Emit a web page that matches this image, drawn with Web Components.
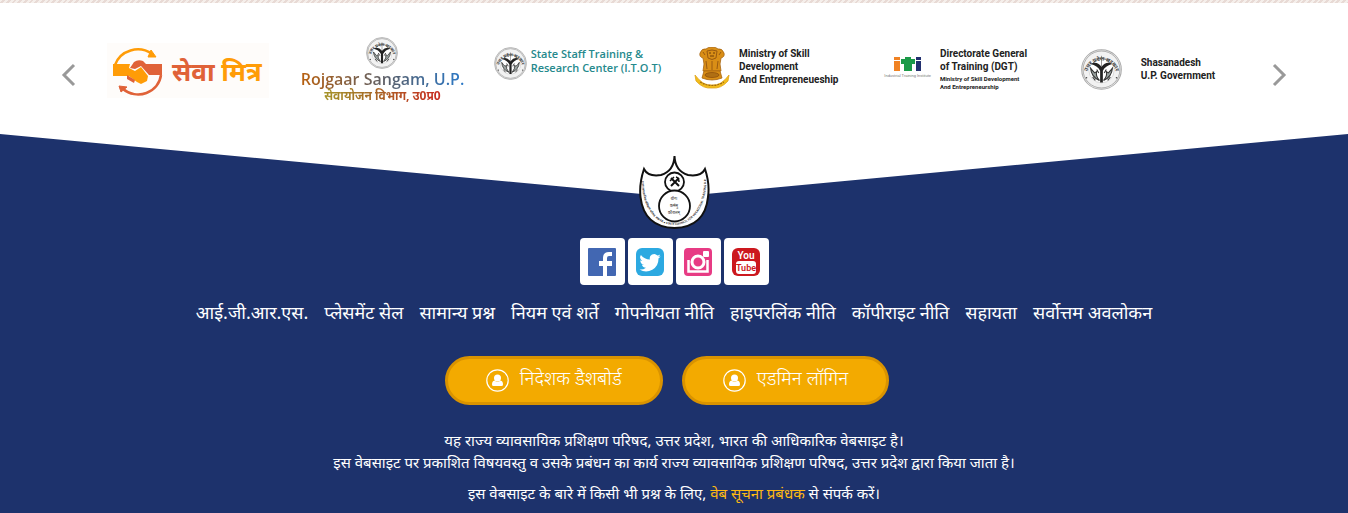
<!DOCTYPE html>
<html lang="hi">
<head>
<meta charset="utf-8">
<meta name="viewport" content="width=device-width, initial-scale=1">
<title>राज्य व्यावसायिक प्रशिक्षण परिषद, उत्तर प्रदेश</title>
<style>
  body { margin: 0; background: #fff; font-family: "Noto Sans", "Noto Sans Devanagari", sans-serif; color: #fff; }
</style>
</head>
<body>
<partner-carousel>
  <partner-logo kind="sewa"></partner-logo>
  <partner-logo kind="rojgaar"></partner-logo>
  <partner-logo kind="itot"></partner-logo>
  <partner-logo kind="skill"></partner-logo>
  <partner-logo kind="dgt"></partner-logo>
  <partner-logo kind="shasan"></partner-logo>
</partner-carousel>
<site-footer>
  <council-emblem slot="emblem"></council-emblem>
  <social-link slot="social" kind="facebook" label="Facebook"></social-link>
  <social-link slot="social" kind="twitter" label="Twitter"></social-link>
  <social-link slot="social" kind="instagram" label="Instagram"></social-link>
  <social-link slot="social" kind="youtube" label="YouTube"></social-link>
  <footer-link slot="links">आई.जी.आर.एस.</footer-link>
  <footer-link slot="links">प्लेसमेंट सेल</footer-link>
  <footer-link slot="links">सामान्य प्रश्न</footer-link>
  <footer-link slot="links">नियम एवं शर्ते</footer-link>
  <footer-link slot="links">गोपनीयता नीति</footer-link>
  <footer-link slot="links">हाइपरलिंक नीति</footer-link>
  <footer-link slot="links">कॉपीराइट नीति</footer-link>
  <footer-link slot="links">सहायता</footer-link>
  <footer-link slot="links">सर्वोत्तम अवलोकन</footer-link>
  <login-button slot="logins">निदेशक डैशबोर्ड</login-button>
  <login-button slot="logins">एडमिन लॉगिन</login-button>
  <footer-note slot="notes">यह राज्य व्यावसायिक प्रशिक्षण परिषद, उत्तर प्रदेश, भारत की आधिकारिक वेबसाइट है।<br>इस वेबसाइट पर प्रकाशित विषयवस्तु व उसके प्रबंधन का कार्य राज्य व्यावसायिक प्रशिक्षण परिषद, उत्तर प्रदेश द्वारा किया जाता है।</footer-note>
  <footer-note slot="notes">इस वेबसाइट के बारे में किसी भी प्रश्न के लिए, <a href="#">वेब सूचना प्रबंधक</a> से संपर्क करें।</footer-note>
</site-footer>

<script>
function define(name, html, setup) {
  const template = document.createElement('template');
  template.innerHTML = html;
  customElements.define(name, class extends HTMLElement {
    constructor() {
      super();
      this.attachShadow({ mode: 'open' }).append(template.content.cloneNode(true));
    }
    connectedCallback() { if (setup) setup(this, this.shadowRoot); }
  });
}

/* Round seal of the Uttar Pradesh government: bow, rivers and two fish */
define('state-seal', `
<style>
  :host { display: block; flex: none; width: var(--seal, 34px); height: var(--seal, 34px); }
  svg { display: block; width: 100%; height: 100%; }
</style>
<svg viewBox="0 0 60 60" aria-hidden="true">
  <defs><path id="arc" d="M9 34A21.500 21.500 0 0 1 51 34"/></defs>
  <circle cx="30" cy="30" r="29" fill="#f2f2f2" stroke="#aaa" stroke-width="1.500"/>
  <circle cx="30" cy="30" r="27" fill="none" stroke="#777" stroke-width=".8"/>
  <circle cx="30" cy="31" r="18.500" fill="#fff" stroke="#b5b5b5" stroke-width=".7"/>
  <text font-family="Noto Sans, sans-serif" font-size="8" font-weight="700" fill="#444"><textPath href="#arc" startOffset="50%" text-anchor="middle">उत्तर प्रदेश सरकार</textPath></text>
  <path d="M14 22Q23 17 30 26Q37 17 46 22Q36 24 32 32V49H28V32Q24 24 14 22Z" fill="#222"/>
  <path d="M18 20Q30 7 42 20" fill="none" stroke="#555" stroke-width="1.400"/>
  <path d="M30 10V26" stroke="#666" stroke-width="1"/>
  <path d="M14 28Q15 41 27 46Q21 39 23 33L20 35Q17 32 14 28ZM46 28Q45 41 33 46Q39 39 37 33L40 35Q43 32 46 28Z" fill="#9aa3a1" stroke="#333" stroke-width="1.500"/>
  <path d="M17 41l4 5M43 41l-4 5M23 30l3 5M37 30l-3 5" stroke="#333" stroke-width="1.600"/>
  <circle cx="8" cy="42" r="1.200" fill="#444"/><circle cx="52" cy="42" r="1.200" fill="#444"/>
</svg>`);

const logos = {
  sewa: `<div class="sewa">
    <svg width="50" height="50" viewBox="0 0 50 50" aria-hidden="true">
      <path d="M2 19A24 23 0 0 1 39 8" fill="none" stroke="#ff9c07" stroke-width="2.500"/>
      <path d="M38 4L43 11L35 11Z" fill="#ff9c07" stroke="#ff9c07"/>
      <path d="M48 29A23 22 0 0 1 10 43" fill="none" stroke="#e06238" stroke-width="2.500"/>
      <path d="M6 40L14 41L8 46Z" fill="#e06238" stroke="#e06238"/>
      <path d="M17 22L21 16Q25 13 30 15L33 18H49V29H40L36 29L28 20L22 23Z" fill="#e06238"/>
      <path d="M0 18H17L16 22L22 25L28 21L35 30L34 35L28 38L24 36L16 30H0Z" fill="#ff9c07"/>
      <path d="M14 29L22 34L21 37L14 33Z" fill="#e06238"/>
    </svg>
    <b><span>सेवा</span> <i>मित्र</i></b></div>`,
  rojgaar: `<div class="rojgaar"><state-seal></state-seal><b class="en">Rojgaar Sangam, U.P.</b><b class="hi">सेवायोजन विभाग, उ0प्र0</b></div>`,
  itot: `<div class="itot"><state-seal></state-seal><p>State Staff Training &amp;<br>Research Center (I.T.O.T)</p></div>`,
  skill: `<div class="skill">
    <svg width="36" height="42" viewBox="0 0 36 42" aria-hidden="true">
      <g fill="#d98e16" stroke="#a76411" stroke-width=".8">
        <path d="M9 11Q5 10 6 6Q8 1 12 2Q14 0 18 0Q22 0 24 2Q28 1 30 6Q31 10 27 11L26 17L27 24H9L10 17Z"/>
        <path d="M10 24H26L28 31Q18 35 8 31Z"/>
        <path d="M1 28Q9 39 18 38Q27 39 35 28L34 34Q27 42 18 41Q9 42 2 34Z" fill="#f2bd1c" stroke="#e0a31a"/>
      </g>
      <path d="M13 4Q18 2 23 4L22 11Q18 14 14 11ZM12 14L13 22M18 14V23M24 14L23 22M9 5L11 8M27 5L25 8" fill="none" stroke="#9a5a10" stroke-width="1"/>
      <path d="M15 6h2M19 6h2M16 9h4" stroke="#6f3c08"/>
      <ellipse cx="18" cy="28" rx="7" ry="2.500" fill="#b06f14" stroke="#8a4c0a" stroke-width=".7"/>
      <path d="M6 35Q18 42 30 35" fill="none" stroke="#a06a12" stroke-dasharray="2 1" stroke-width="1.200"/>
    </svg>
    <p>Ministry of Skill<br>Development<br>And Entrepreneueship</p></div>`,
  dgt: `<div class="dgt">
    <figure>
      <svg width="28" height="15" viewBox="0 0 28 15" aria-hidden="true">
        <path d="M0 0H6V3H0ZM0 4H6V14H0Z" fill="#f08223"/>
        <path d="M7 2H11V0H17V2H21V7H18V14H10V7H7Z" fill="#1c9a48"/>
        <path d="M22 0H27V3H22ZM22 4H27V14H22Z" fill="#22306f"/>
      </svg>
      <figcaption>Industrial Training Institute</figcaption>
    </figure>
    <p>Directorate General<br>of Training (DGT)<small>Ministry of Skill Development<br>And Entrepreneurship</small></p></div>`,
  shasan: `<div class="shasan"><state-seal></state-seal><p>Shasanadesh<br>U.P. Government</p></div>`
};

define('partner-logo', `
<style>
  :host { display: block; flex: 1; min-width: 0; margin: 0 16px; white-space: nowrap; }
  div { display: flex; box-sizing: border-box; }
  p { margin: 0; color: #222; font: 700 10px/13px Roboto, "Liberation Sans", sans-serif; }
  .sewa { margin-top: 6px; height: 55px; padding-left: 6px; gap: 9px; align-items: center; background: #fefcfa; }
  .sewa b { font-size: 26px; line-height: 48px; color: #e06238; }
  .sewa i { font-style: normal; color: #ff9c07; }
  .rojgaar { flex-direction: column; align-items: center; --seal: 32px; }
  .rojgaar .en { font: 600 16px/20px "Open Sans", sans-serif; background: linear-gradient(90deg, #b8600f, #57606e 55%, #2b79c8); background-clip: text; color: transparent; }
  .rojgaar .hi { font-size: 12px; line-height: 18px; margin-top: -2px; background: linear-gradient(90deg, #a5942a, #a66b26 40%, #c92a20); background-clip: text; color: transparent; }
  .itot { gap: 4px; padding-top: 10px; margin-left: -2px; --seal: 33px; }
  .itot p { font: 600 11px/14px "Open Sans", sans-serif; color: #25898c; }
  .skill { gap: 9px; padding: 10px 0 0 4px; }
  .dgt { gap: 9px; padding: 10px 0 0; }
  .dgt figure { margin: 10px 0 0; display: flex; flex-direction: column; align-items: center; }
  .dgt figcaption { color: #777; font: 4px/8px "Liberation Sans", sans-serif; }
  small { display: block; margin-top: 2px; font-size: 6px; line-height: 8px; }
  .shasan { gap: 19px; padding: 12px 0 0 2px; --seal: 41px; }
  .shasan p { padding-top: 7px; }
</style>
<section></section>`, (host, root) => {
  root.querySelector('section').innerHTML = logos[host.getAttribute('kind')];
});

define('partner-carousel', `
<style>
  :host { display: block; }
  .strip { height: 3px; background: repeating-linear-gradient(135deg, #f5efeb 0 2px, #e8dad5 2px 4px); }
  .row { display: grid; grid-template-columns: 91px 1fr 91px; padding: 34px 0 30px; }
  .slides { display: flex; min-width: 0; height: 67px; }
  button { border: 0; background: none; padding: 8px 0 0; display: flex; align-items: flex-start; color: #999; cursor: pointer; }
  .prev { padding-right: 14px; justify-content: flex-end; }
  .next { padding-left: 14px; justify-content: flex-start; }
  button svg { margin-top: 18px; }
</style>
<div class="strip"></div>
<div class="row">
  <button class="prev" aria-label="Previous"><svg width="16" height="24" viewBox="0 0 16 24" fill="none" stroke="currentColor" stroke-width="3"><path d="M13 2L3 12L13 22"/></svg></button>
  <div class="slides"><slot></slot></div>
  <button class="next" aria-label="Next"><svg width="16" height="24" viewBox="0 0 16 24" fill="none" stroke="currentColor" stroke-width="3"><path d="M3 2L13 12L3 22"/></svg></button>
</div>`);

define('council-emblem', `
<style>:host { display: block; } svg { display: block; }</style>
<svg width="72" height="74" viewBox="0 0 72 74" role="img" aria-label="State Council for Vocational Training">
  <defs><path id="ring" d="M4 20C2 50 16 70 36 70S70 50 68 20"/></defs>
  <path d="M36.500 1Q37 16 50 20Q63 22 67 14Q72 29 70 42Q67 72 36.500 73Q6 72 2.500 42Q1 29 6 14Q10 22 23 20Q36 16 36.500 1Z" fill="#fff" stroke="#111" stroke-width="2"/>
  <circle cx="36.500" cy="27" r="9.500" fill="#fff" stroke="#111" stroke-width="1.800"/>
  <circle cx="36.500" cy="51" r="15.500" fill="#fff" stroke="#111" stroke-width="1.800"/>
  <path d="M33 23L41 31M41 23L33 31" stroke="#111" stroke-width="2"/>
  <path d="M32 26L36 22M38 22Q41 23 41 27" fill="none" stroke="#111" stroke-width="1.500"/>
  <g font-family="Noto Sans, sans-serif" fill="#222" text-anchor="middle" font-size="4">
    <text x="36" y="45">योगः</text><text x="36" y="52">कर्मसु</text><text x="36" y="59">कौशलम्</text>
  </g>
  <text font-family="Noto Sans, sans-serif" fill="#222" font-weight="600" font-size="3"><textPath href="#ring" startOffset="6">राज्य व्यावसायिक प्रशिक्षण परिषद, लखनऊ ● STATE COUNCIL FOR VOCATIONAL TRAINING U.P.</textPath></text>
</svg>`);

const socialIcons = {
  facebook: `<rect width="28" height="28" rx="1" fill="#4267b2"/><path d="M15 28V18H11V13H15V10Q15 4 21 4H24V8H21Q19 8 19 10V13H24V18H19V28Z" fill="#fff"/>`,
  twitter: `<rect width="28" height="28" rx="6" fill="#2ca9e1"/><path transform="translate(-3 -2) scale(1.200)" d="M23 8.500a7 7 0 0 1-2 .6 3.600 3.600 0 0 0 1.600-2 7 7 0 0 1-2.300.9 3.600 3.600 0 0 0-6.200 3.300A10.300 10.300 0 0 1 6.600 7.500a3.600 3.600 0 0 0 1.100 4.900 3.600 3.600 0 0 1-1.600-.5 3.600 3.600 0 0 0 2.900 3.600 3.600 3.600 0 0 1-1.600.1 3.600 3.600 0 0 0 3.400 2.500A7.300 7.300 0 0 1 5.400 19.600 10.300 10.300 0 0 0 21.200 10.400 7 7 0 0 0 23 8.500Z" fill="#fff"/>`,
  instagram: `<rect width="28" height="28" rx="4" fill="#e73b84"/><path d="M4.500 12V23.500H23.500V12" fill="none" stroke="#fff" stroke-width="2.500"/><circle cx="14" cy="14" r="6" fill="#e73b84" stroke="#fff" stroke-width="3"/><rect x="19" y="3" width="6" height="6" rx="1" fill="#fff"/>`,
  youtube: `<rect width="28" height="28" rx="6" fill="#cc181e"/><rect x="4" y="13" width="20" height="13" rx="3" fill="#fff"/><g text-anchor="middle" font-family="Roboto, sans-serif" font-weight="600"><text x="14" y="11" font-size="10" fill="#fff">You</text><text x="14" y="23" font-size="9" fill="#cc181e">Tube</text></g>`
};
define('social-link', `
<style>
  :host { display: block; }
  a { display: flex; width: 45px; height: 47px; align-items: center; justify-content: center; background: #fff; border-radius: 4px; }
</style>
<a href="#"><svg width="28" height="28" viewBox="0 0 28 28"></svg></a>`, (host, root) => {
  root.querySelector('a').setAttribute('aria-label', host.getAttribute('label'));
  root.querySelector('svg').innerHTML = socialIcons[host.getAttribute('kind')];
});

define('footer-link', `
<style>:host { display: block; } a { color: #fff; text-decoration: none; font-size: 18px; line-height: 28px; white-space: nowrap; }</style>
<a href="#"><slot></slot></a>`);

define('login-button', `
<style>
  :host { display: block; }
  button { display: flex; align-items: center; gap: 11px; height: 49px; padding: 0 38px; border: 3px solid #d99300; border-radius: 25px; background: #f3aa00; color: #fff; font: 300 19px/24px "Noto Sans", "Noto Sans Devanagari", sans-serif; white-space: nowrap; cursor: pointer; }
  span { padding-bottom: 6px; }
</style>
<button type="button">
  <svg width="23" height="23" viewBox="0 0 23 23" aria-hidden="true"><circle cx="11.500" cy="11.500" r="10.700" fill="none" stroke="#fff" stroke-width="1.200"/><circle cx="11.500" cy="9" r="3.500" fill="#fff"/><path d="M8.500 11.500Q11.500 14 14.500 11.500Q17 12 17 15.500Q17 17 15.500 17H7.500Q6 17 6 15.500Q6 12 8.500 11.500Z" fill="#fff"/></svg>
  <span><slot></slot></span>
</button>`);

define('footer-note', `
<style>
  :host { display: block; font-size: 15px; line-height: 22px; text-align: center; }
  ::slotted(a) { color: #fdb913; text-decoration: none; }
</style>
<slot></slot>`);

define('site-footer', `
<style>
  :host { display: block; position: relative; }
  .shape { position: absolute; inset: 0; background: #1d326c; clip-path: polygon(0 0, 50% 63px, 100% 0, 100% 100%, 0 100%); }
  footer { position: relative; display: flex; flex-direction: column; align-items: center; padding: 21px 16px 9px; }
  .social { display: flex; gap: 3px; margin-top: 9px; }
  nav { display: flex; flex-wrap: wrap; justify-content: center; gap: 0 16px; margin-top: 13px; }
  .logins { display: flex; flex-wrap: wrap; gap: 19px; margin: 30px 14px 0 0; }
  .notes { display: grid; gap: 9px; margin-top: 24px; }
</style>
<div class="shape"></div>
<footer>
  <slot name="emblem"></slot>
  <div class="social"><slot name="social"></slot></div>
  <nav><slot name="links"></slot></nav>
  <div class="logins"><slot name="logins"></slot></div>
  <div class="notes"><slot name="notes"></slot></div>
</footer>`);
</script>
</body>
</html>
